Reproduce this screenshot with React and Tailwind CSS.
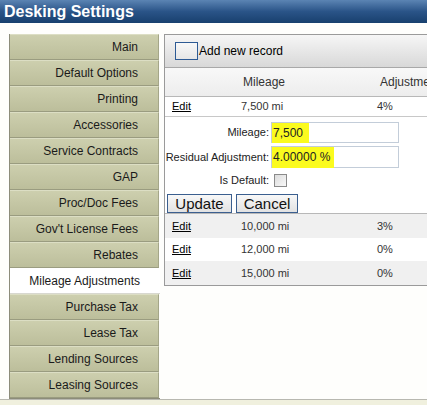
import React from 'react';

const tabs = [
  'Main',
  'Default Options',
  'Printing',
  'Accessories',
  'Service Contracts',
  'GAP',
  'Proc/Doc Fees',
  "Gov't License Fees",
  'Rebates',
  'Mileage Adjustments',
  'Purchase Tax',
  'Lease Tax',
  'Lending Sources',
  'Leasing Sources',
];

const rows = [
  { miles: '10,000 mi', adj: '3%', alt: true },
  { miles: '12,000 mi', adj: '0%', alt: false },
  { miles: '15,000 mi', adj: '0%', alt: true },
];

const Sidebar = () => (
  <div className="ml-[9px] w-[151px] shrink-0 border-l border-[#8c8c7a] border-b border-b-[#8c8c7a]">
    {tabs.map((t) => {
      const active = t === 'Mileage Adjustments';
      return (
        <div
          key={t}
          className={
            active
              ? 'h-[26px] flex items-center justify-end pr-[20px] bg-white text-[12px] text-[#1a1a1a] border-b border-[#d8d8d0]'
              : 'h-[26px] flex items-center justify-end pr-[20px] mr-[1px] bg-gradient-to-b from-[#cdcfae] to-[#bcbe9b] text-[12px] text-[#1a1a1a] border-t border-t-[#dcdec4] border-b border-b-[#9a9c80] border-r border-r-[#a4a688]'
          }
        >
          {t}
        </div>
      );
    })}
  </div>
);

const EditLink = () => <span className="underline text-[11px] text-black">Edit</span>;

const Panel = () => (
  <div className="ml-[4px] w-[320px] shrink-0">
    <div className="border border-[#9a9a9a] bg-white">
      {/* toolbar */}
      <div className="h-[32px] flex items-center pl-[10px] bg-gradient-to-b from-[#f6f6f6] to-[#d8d8d8]">
        <div className="w-[23px] h-[18px] border border-[#2d5a94] bg-gradient-to-b from-[#f8f8f8] to-[#e6e6e6]" />
        <span className="text-[12px] text-black ml-[1px]">Add new record</span>
      </div>
      {/* header */}
      <div className="h-[30px] grid grid-cols-[70px_137px_1fr] items-center border-t border-[#a8a8a8] border-b border-b-[#b8b8b8] bg-gradient-to-b from-[#f8f8f8] to-[#ededed] text-[12px] text-[#333] whitespace-nowrap">
        <div />
        <div className="pl-[8px]">Mileage</div>
        <div className="pl-[8px]">Adjustment</div>
      </div>
      {/* first row */}
      <div className="h-[20px] grid grid-cols-[70px_136px_1fr] items-center border-b border-[#c8c8c8] text-[11px] text-[#333]">
        <div className="pl-[7px]"><EditLink /></div>
        <div className="pl-[6px]">7,500 mi</div>
        <div className="pl-[6px]">4%</div>
      </div>
      {/* edit form */}
      <div className="h-[97px] pt-[5px] border-b border-[#b8b8b8] text-[11px] text-[#222]">
        <div className="grid grid-cols-[106px_auto] gap-y-[3px] items-center whitespace-nowrap">
          <div className="text-right pr-[2px]">Mileage:</div>
          <div className="w-[128px] h-[21px] border border-[#c3cdd9] flex items-center">
            <span className="bg-[#fbfb1e] h-[20px] flex items-center pl-[1px] pr-[6px] text-[12px] text-[#222]">7,500</span>
          </div>
          <div className="text-right pr-[2px]">Residual Adjustment:</div>
          <div className="w-[128px] h-[22px] border border-[#c3cdd9] flex items-center">
            <span className="bg-[#fbfb1e] h-[21px] flex items-center pl-[1px] pr-[4px] text-[12px] text-[#222]">4.00000 %</span>
          </div>
          <div className="text-right pr-[2px] mt-[1px]">Is Default:</div>
          <div className="mt-[1px] pl-[3px]">
            <div className="w-[13px] h-[13px] border border-[#8a8a8a] bg-gradient-to-br from-[#dcdcdc] to-[#f8f8f8]" />
          </div>
        </div>
        <div className="flex gap-[4px] pl-[2px] mt-[5px]">
          <button className="w-[65px] h-[19px] border border-[#3b5f8f] bg-gradient-to-b from-[#f8f8f8] to-[#e2e2e2] text-[15px] leading-none text-[#111]">Update</button>
          <button className="w-[62px] h-[19px] border border-[#3b5f8f] bg-gradient-to-b from-[#f8f8f8] to-[#e2e2e2] text-[15px] leading-none text-[#111]">Cancel</button>
        </div>
      </div>
      {rows.map((r) => (
        <div
          key={r.miles}
          className={
            (r.alt ? 'bg-[#f0f0f0] h-[24px] ' : 'bg-white h-[23px] ') +
            'grid grid-cols-[70px_136px_1fr] items-center text-[11px] text-[#333]'
          }
        >
          <div className="pl-[7px]"><EditLink /></div>
          <div className="pl-[6px]">{r.miles}</div>
          <div className="pl-[6px]">{r.adj}</div>
        </div>
      ))}
    </div>
  </div>
);

export default function App() {
  return (
    <div className="w-[427px] h-[405px] overflow-hidden bg-[#fefefc] flex flex-col" style={{ fontFamily: '"Liberation Sans", Arial, sans-serif' }}>
      <div className="h-[23px] shrink-0 flex items-center pl-[4px] bg-gradient-to-b from-[#5b84b3] via-[#2a5488] to-[#18406e]">
        <span className="text-white font-bold text-[16px] leading-none">Desking Settings</span>
      </div>
      <div className="flex mt-[11px] h-[365px]">
        <Sidebar />
        <Panel />
      </div>
      <div className="flex-1 border-t border-[#b8b8b0] bg-[#f0f0de]" />
    </div>
  );
}
